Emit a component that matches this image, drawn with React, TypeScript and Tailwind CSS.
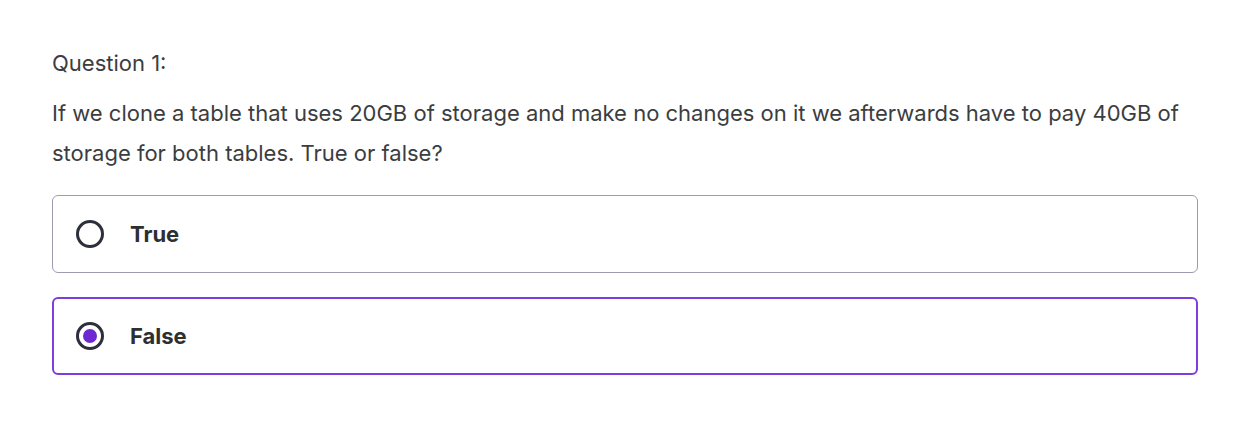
import React from "react";

const font = { fontFamily: "Inter, 'Noto Sans', sans-serif" };

function Option({ label, selected }: { label: string; selected: boolean }) {
  return (
    <div
      className={
        "flex h-[78px] w-full items-center rounded-[6px] " +
        (selected
          ? "border-2 border-[#7c3fdc] pl-[22px]"
          : "border border-[#9c9cb0] pl-[23px]")
      }
    >
      <div className="flex h-[28px] w-[28px] items-center justify-center rounded-full border-[3px] border-[#2d2f3d]">
        {selected && <div className="h-[14px] w-[14px] rounded-full bg-[#6d28d2]" />}
      </div>
      <span className="ml-[26px] text-[22px] font-bold text-[#2d2f31]">{label}</span>
    </div>
  );
}

export default function App() {
  return (
    <div className="h-[432px] w-[1235px] bg-white pl-[52px] pt-[43px]" style={font}>
      <div className="w-[1146px] text-[#3b3d40]">
        <div className="text-[22px] leading-[40px]">Question 1:</div>
        <p className="mt-[10px] text-[22px] leading-[40px]">
          If we clone a table that uses 20GB of storage and make no changes on it we afterwards have to pay 40GB of storage for both tables. True or false?
        </p>
        <div className="mt-[22px] flex flex-col gap-[24px]">
          <Option label="True" selected={false} />
          <Option label="False" selected={true} />
        </div>
      </div>
    </div>
  );
}
